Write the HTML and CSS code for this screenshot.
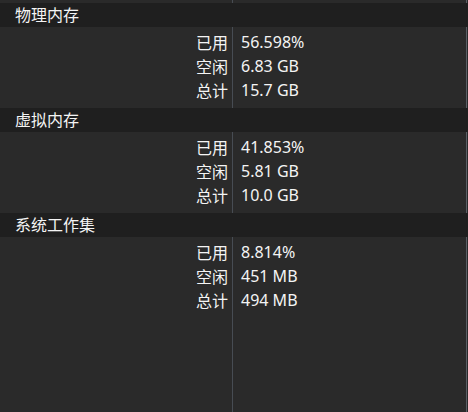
FILE: index.html
```html
<!DOCTYPE html>
<html lang="zh-CN">
<head>
  <meta charset="UTF-8">
  <title>内存</title>
  <link rel="stylesheet" href="styles.css">
</head>
<body>
  <div class="panel">

    <div class="group">
      <div class="group-title">物理内存</div>
      <div class="rows">
        <div class="label">已用</div><div class="value">56.598%</div>
        <div class="label">空闲</div><div class="value">6.83 GB</div>
        <div class="label">总计</div><div class="value">15.7 GB</div>
      </div>
    </div>

    <div class="group">
      <div class="group-title">虚拟内存</div>
      <div class="rows">
        <div class="label">已用</div><div class="value">41.853%</div>
        <div class="label">空闲</div><div class="value">5.81 GB</div>
        <div class="label">总计</div><div class="value">10.0 GB</div>
      </div>
    </div>

    <div class="group">
      <div class="group-title">系统工作集</div>
      <div class="rows">
        <div class="label">已用</div><div class="value">8.814%</div>
        <div class="label">空闲</div><div class="value">451 MB</div>
        <div class="label">总计</div><div class="value">494 MB</div>
      </div>
    </div>

  </div>
</body>
</html>
```

FILE: styles.css
```css
html, body {
  margin: 0;
  padding: 0;
  height: 100%;
  background-color: #2a2a2a;
}

body {
  font-family: "Noto Sans", "Noto Sans CJK SC", sans-serif;
  font-size: 16px;
  color: #f4f4f4;
}

/* column divider and right edge drawn as background lines */
.panel {
  height: 100%;
  padding-top: 3px;
  box-sizing: border-box;
  background-image:
    linear-gradient(#474c53, #474c53),
    linear-gradient(#5a5f66, #5a5f66);
  background-size: 1px 100%, 1px 100%;
  background-position: 232px 0, 466px 0;
  background-repeat: no-repeat;
}

.group {
  padding-bottom: 6px;
}

.group-title {
  height: 24px;
  line-height: 22px;
  padding-left: 15px;
  background-color: #1f1f1f;
  font-family: "Noto Sans CJK SC", sans-serif;
}

.rows {
  display: grid;
  grid-template-columns: 232px 1fr;
  grid-auto-rows: 24px;
  line-height: 24px;
  padding-top: 3px;
}

.label {
  text-align: right;
  padding-right: 4px;
  font-family: "Noto Sans CJK SC", sans-serif;
}

.value {
  padding-left: 9px;
}
```
